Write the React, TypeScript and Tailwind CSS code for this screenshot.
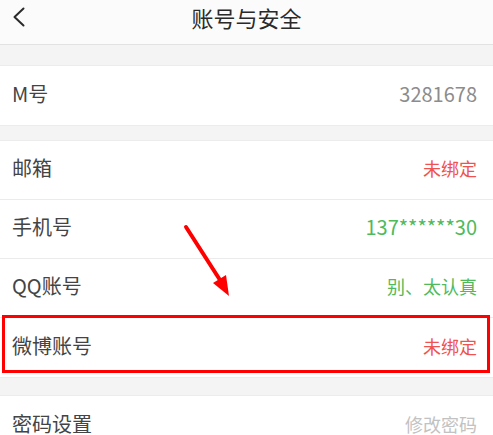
import React from "react";

type Row = { label: string; value: string; color: string; sep?: boolean; num?: boolean };

function RowItem({ label, value, color, sep, num }: Row) {
  return (
    <div
      className={`flex h-[59px] shrink-0 items-center justify-between bg-white pb-[4px] pl-[12px] pr-[16px] ${
        sep ? "border-b border-[#ebebeb]" : ""
      }`}
    >
      <span className="text-[20px] leading-none text-[#444444]">{label}</span>
      <span className={`leading-none ${num ? "text-[20px]" : "text-[18px]"} ${color}`}>{value}</span>
    </div>
  );
}

export default function App() {
  return (
    <div
      className="relative flex h-[435px] w-[493px] flex-col overflow-hidden bg-[#f4f4f4]"
      style={{ fontFamily: '"Noto Sans CJK SC", "Noto Sans", sans-serif' }}
    >
      <div className="flex h-[45px] shrink-0 items-start border-b border-[#e2e2e2] bg-[#fbfbfb] pl-[12px] pr-[26px] pt-[4px]">
        <svg className="mt-[3px] shrink-0" width="14" height="20" viewBox="0 0 14 20" fill="none">
          <path d="M11.5 1.5 L2.5 10 L11.5 18.5" stroke="#2a2a2a" strokeWidth="2" strokeLinecap="round" strokeLinejoin="round" />
        </svg>
        <span className="flex-1 text-center text-[22px] leading-[26px] text-[#2a2a2a]">账号与安全</span>
      </div>
      <div className="h-[20px] shrink-0" />
      <div className="flex shrink-0 flex-col border-y border-[#ececec]">
        <RowItem label="M号" value="3281678" color="text-[#8c8c8c]" num />
      </div>
      <div className="h-[14px] shrink-0" />
      <div className="flex shrink-0 flex-col border-t border-[#ececec]">
        <RowItem label="邮箱" value="未绑定" color="text-[#f0524f]" sep />
        <RowItem label="手机号" value="137******30" color="text-[#4fba5c]" sep num />
        <RowItem label="QQ账号" value="别、太认真" color="text-[#4fba5c]" sep />
        <RowItem label="微博账号" value="未绑定" color="text-[#f0524f]" />
      </div>
      <div className="h-[18px] shrink-0 border-t border-[#ececec]" />
      <div className="flex shrink-0 flex-col border-t border-[#ececec]">
        <RowItem label="密码设置" value="修改密码" color="text-[#c2c2c2]" />
      </div>

      <div className="pointer-events-none absolute left-[2px] top-[315px] h-[58px] w-[488px] border-[3px] border-[#ff0000]" />
      <svg className="pointer-events-none absolute left-0 top-0" width="493" height="435" viewBox="0 0 493 435">
        <line x1="186" y1="227" x2="220" y2="280" stroke="#ff0000" strokeWidth="4" strokeLinecap="round" />
        <polygon points="229,296 213,283 226,275" fill="#ff0000" />
      </svg>
    </div>
  );
}
